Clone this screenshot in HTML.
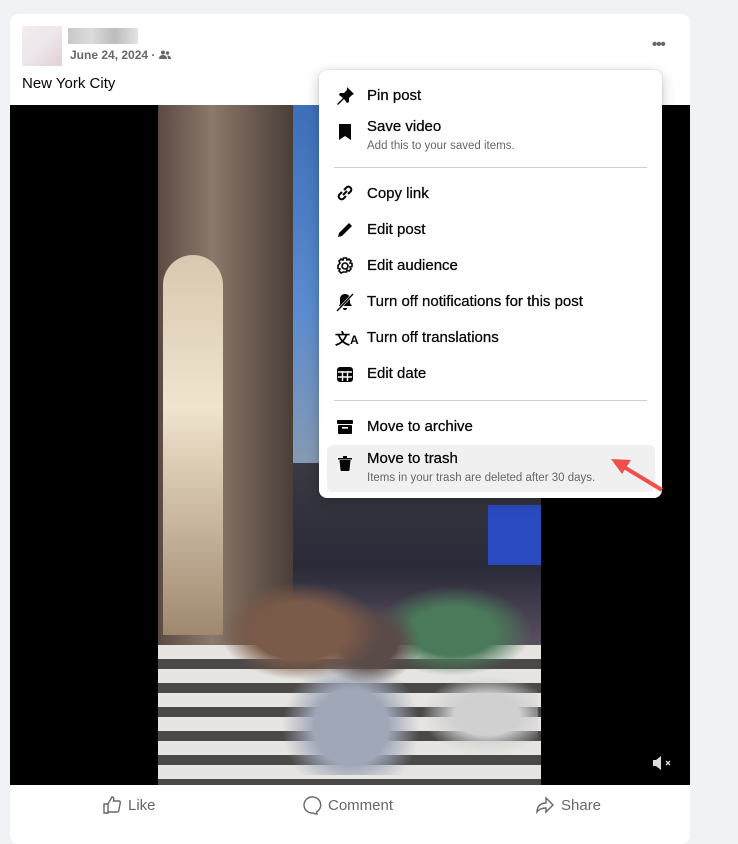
<!DOCTYPE html>
<html><head><style>
*{margin:0;padding:0;box-sizing:border-box}
body{width:738px;height:824px;background:#f0f2f5;font-family:"Liberation Sans",sans-serif;position:relative;overflow:hidden;color:#050505}
.card{position:absolute;left:10px;top:14px;width:680px;height:830px;background:#fff;border-radius:9px;overflow:hidden}
.video{position:absolute;left:0;top:91px;width:680px;height:680px;background:#000}
.scene{position:absolute;left:148px;top:0;width:383px;height:680px;overflow:hidden;
background:linear-gradient(180deg,#3d6fb8 0%,#5b8bd0 30%,#8a9bb0 55%,#6b6470 70%,#9a9494 85%,#bdbab5 100%)}
.bld{position:absolute;left:0;top:0;width:135px;height:560px;background:linear-gradient(90deg,#5a4a42,#8a7a6c 40%,#6a5a50 70%,#4a3e38)}
.win{position:absolute;left:5px;top:150px;width:60px;height:380px;background:linear-gradient(180deg,#d8c8b0,#f0e4cc 40%,#a08870);border-radius:30px 30px 0 0}
.street{position:absolute;left:0;top:540px;width:383px;height:140px;background:repeating-linear-gradient(180deg,#e6e4e0 0 14px,#4a4848 14px 24px)}
.people{position:absolute;left:40px;top:430px;width:340px;height:240px;background:radial-gradient(ellipse at 30% 40%,#7a5a48 0 14%,transparent 24%),radial-gradient(ellipse at 50% 45%,#5a4a48 0 12%,transparent 22%),radial-gradient(ellipse at 75% 40%,#4a7a5a 0 12%,transparent 22%),radial-gradient(ellipse at 45% 80%,#a0a8b8 0 14%,transparent 26%),radial-gradient(ellipse at 85% 75%,#d0d0d0 0 8%,transparent 16%)}
.city{position:absolute;left:135px;top:280px;width:248px;height:260px;background:linear-gradient(180deg,transparent 0 30%,#3a3a44 30%,#2a2a38 70%,#5a5060)}
.blue{position:absolute;left:330px;top:400px;width:53px;height:60px;background:#2a4ac0}
.menu{position:absolute;left:319px;top:70px;width:343px;height:428px;background:#fff;border-radius:8px;box-shadow:0 4px 14px rgba(0,0,0,.22),0 0 2px rgba(0,0,0,.15)}
.tail{position:absolute;left:645px;top:58px;width:0;height:0;border-left:13px solid transparent;border-right:13px solid transparent;border-bottom:13px solid #fff}
.it{position:absolute;left:48px;font-size:15px;color:#050505;-webkit-text-stroke:.25px #050505}
.sub{position:absolute;left:48px;font-size:11.5px;color:#65676b}
.ic{position:absolute;left:16px;width:20px;height:20px}
.hr{position:absolute;left:15px;width:313px;height:1px;background:#ced0d4}
.act{position:absolute;top:781px;font-size:15px;color:#65676b;display:flex;align-items:center;gap:6px}
</style></head><body>
<div class="card">
 <div style="position:absolute;left:12px;top:12px;width:40px;height:40px;background:linear-gradient(135deg,#f2e8ea,#e8e0e6 50%,#d8c4c8);opacity:.8"></div>
 <div style="position:absolute;left:58px;top:14px;width:70px;height:16px;background:linear-gradient(90deg,#c8c8c8,#dcdcdc,#bcbcbc,#e4e4e4)"></div>
 <div style="position:absolute;left:60px;top:34px;font-size:12px;color:#65676b;font-weight:bold">June 24, 2024 · <svg width="12" height="10" viewBox="0 0 12 10" style="vertical-align:-1px"><circle cx="4" cy="2.5" r="2" fill="#65676b"/><circle cx="8.5" cy="3" r="1.7" fill="#65676b"/><path d="M0 9c0-3 2-4 4-4s4 1 4 4z" fill="#65676b"/><path d="M8.5 5.5c2 0 3.5 1 3.5 3.5H9z" fill="#65676b"/></svg></div>
 <div style="position:absolute;left:12px;top:61px;font-size:15px">New York City</div>
 <div style="position:absolute;left:642px;top:22px;font-size:15px;color:#65676b;letter-spacing:-1px;font-weight:bold">•••</div>
 <div class="video">
  <div class="scene"><div class="city"></div><div class="blue"></div><div class="bld"></div><div class="win"></div><div class="street"></div><div class="people"></div></div>
  <svg style="position:absolute;left:642px;top:650px" width="22" height="16" viewBox="0 0 22 16"><path d="M1 5h3l5-4v14l-5-4H1z" fill="#ddd"/><path d="M14 6l4 4M18 6l-4 4" stroke="#ddd" stroke-width="1.3"/></svg>
 </div>
 <div class="act" style="left:92px"><svg width="20" height="20" viewBox="0 0 20 20" fill="none" stroke="#65676b" stroke-width="1.4"><path d="M2 9h4v9H2zM6 9l4-7c2 0 2 2 1.5 4H17c1 0 1.5 1 1.2 2l-1.5 8c-.2.8-.8 1-1.5 1H6"/></svg>Like</div>
 <div class="act" style="left:292px"><svg width="20" height="20" viewBox="0 0 20 20" fill="none" stroke="#65676b" stroke-width="1.4"><path d="M10 2a8 8 0 1 0 0 16c1 0 2 .3 3 .8l2 .2-.5-2A8 8 0 0 0 10 2z"/></svg>Comment</div>
 <div class="act" style="left:525px"><svg width="20" height="20" viewBox="0 0 20 20" fill="none" stroke="#65676b" stroke-width="1.4"><path d="M11 3l7 7-7 7v-4c-4 0-7 1-9 4 0-5 3-9 9-9z"/></svg>Share</div>
</div>
<div class="tail"></div>
<div class="menu">
 <svg class="ic" style="top:16px" viewBox="0 0 20 20"><path d="M12 1l7 7-2 1-3 3 0 4-2 1-3-4-6 6-1-1 6-6-4-3 1-2h4l3-3z" fill="#050505"/></svg>
 <div class="it" style="top:17px">Pin post</div>
 <svg class="ic" style="top:52px" viewBox="0 0 20 20"><path d="M4 2h12v16l-6-4-6 4z" fill="#050505"/></svg>
 <div class="it" style="top:48px">Save video</div>
 <div class="sub" style="top:70px">Add this to your saved items.</div>
 <div class="hr" style="top:97px"></div>
 <svg class="ic" style="top:113px" viewBox="0 0 20 20" fill="none" stroke="#050505" stroke-width="2"><path d="M8 12l4-4M7 9l-3 3a3 3 0 0 0 4 4l3-3M13 11l3-3a3 3 0 0 0-4-4L9 7"/></svg>
 <div class="it" style="top:115px">Copy link</div>
 <svg class="ic" style="top:150px" viewBox="0 0 20 20"><path d="M3 17l1-4L14 3l3 3L7 16z" fill="#050505"/></svg>
 <div class="it" style="top:151px">Edit post</div>
 <svg class="ic" style="top:186px" viewBox="0 0 20 20" fill="none" stroke="#050505" stroke-width="1.6"><circle cx="10" cy="10" r="3"/><path d="M8.5 2h3l.5 2 2-1 2 2-1 2 2 .5v3l-2 .5 1 2-2 2-2-1-.5 2h-3L8 16l-2 1-2-2 1-2-2-.5v-3L5 7 4 5l2-2 2 1z"/></svg>
 <div class="it" style="top:187px">Edit audience</div>
 <svg class="ic" style="top:222px" viewBox="0 0 20 20"><path d="M10 2c3 0 5 2 5 5v4l2 3H4l1-2V7c0-3 2-5 5-5zM8 16h4a2 2 0 0 1-4 0z" fill="#050505"/><path d="M2 19L18 2" stroke="#fff" stroke-width="2.5"/><path d="M2 19L18 2" stroke="#050505" stroke-width="1.3"/></svg>
 <div class="it" style="top:223px">Turn off notifications for this post</div>
 <div style="position:absolute;left:16px;top:258px;font-size:15px;font-weight:bold">文<span style="font-size:12px">A</span></div>
 <div class="it" style="top:259px">Turn off translations</div>
 <svg class="ic" style="top:294px" viewBox="0 0 20 20"><rect x="2" y="3" width="16" height="15" rx="3" fill="#050505"/><path d="M3 8h14M3 13h14M7.5 7v10M12.5 7v10" stroke="#fff" stroke-width="1.4"/></svg>
 <div class="it" style="top:295px">Edit date</div>
 <div class="hr" style="top:330px"></div>
 <svg class="ic" style="top:347px" viewBox="0 0 20 20"><rect x="2" y="3" width="16" height="4" rx="1" fill="#050505"/><rect x="3" y="8" width="14" height="9" rx="1" fill="#050505"/><rect x="7" y="10" width="6" height="1.6" fill="#fff"/></svg>
 <div class="it" style="top:348px">Move to archive</div>
 <div style="position:absolute;left:8px;top:375px;width:328px;height:47px;background:#f0f0f0;border-radius:6px"></div>
 <svg class="ic" style="top:383px" viewBox="0 0 20 20"><path d="M3 5h14v1.5H3zM8 3h4v2H8zM4.5 7h11l-1 10c0 .6-.5 1-1 1h-7c-.5 0-1-.4-1-1z" fill="#050505"/></svg>
 <div class="it" style="top:380px">Move to trash</div>
 <div class="sub" style="top:402px">Items in your trash are deleted after 30 days.</div>
</div>
<svg style="position:absolute;left:605px;top:452px" width="65" height="45" viewBox="0 0 65 45"><path d="M57 38L14 12" stroke="#f0504a" stroke-width="4"/><path d="M6 7l20 1-9 14z" fill="#f0504a"/></svg>
</body></html>
